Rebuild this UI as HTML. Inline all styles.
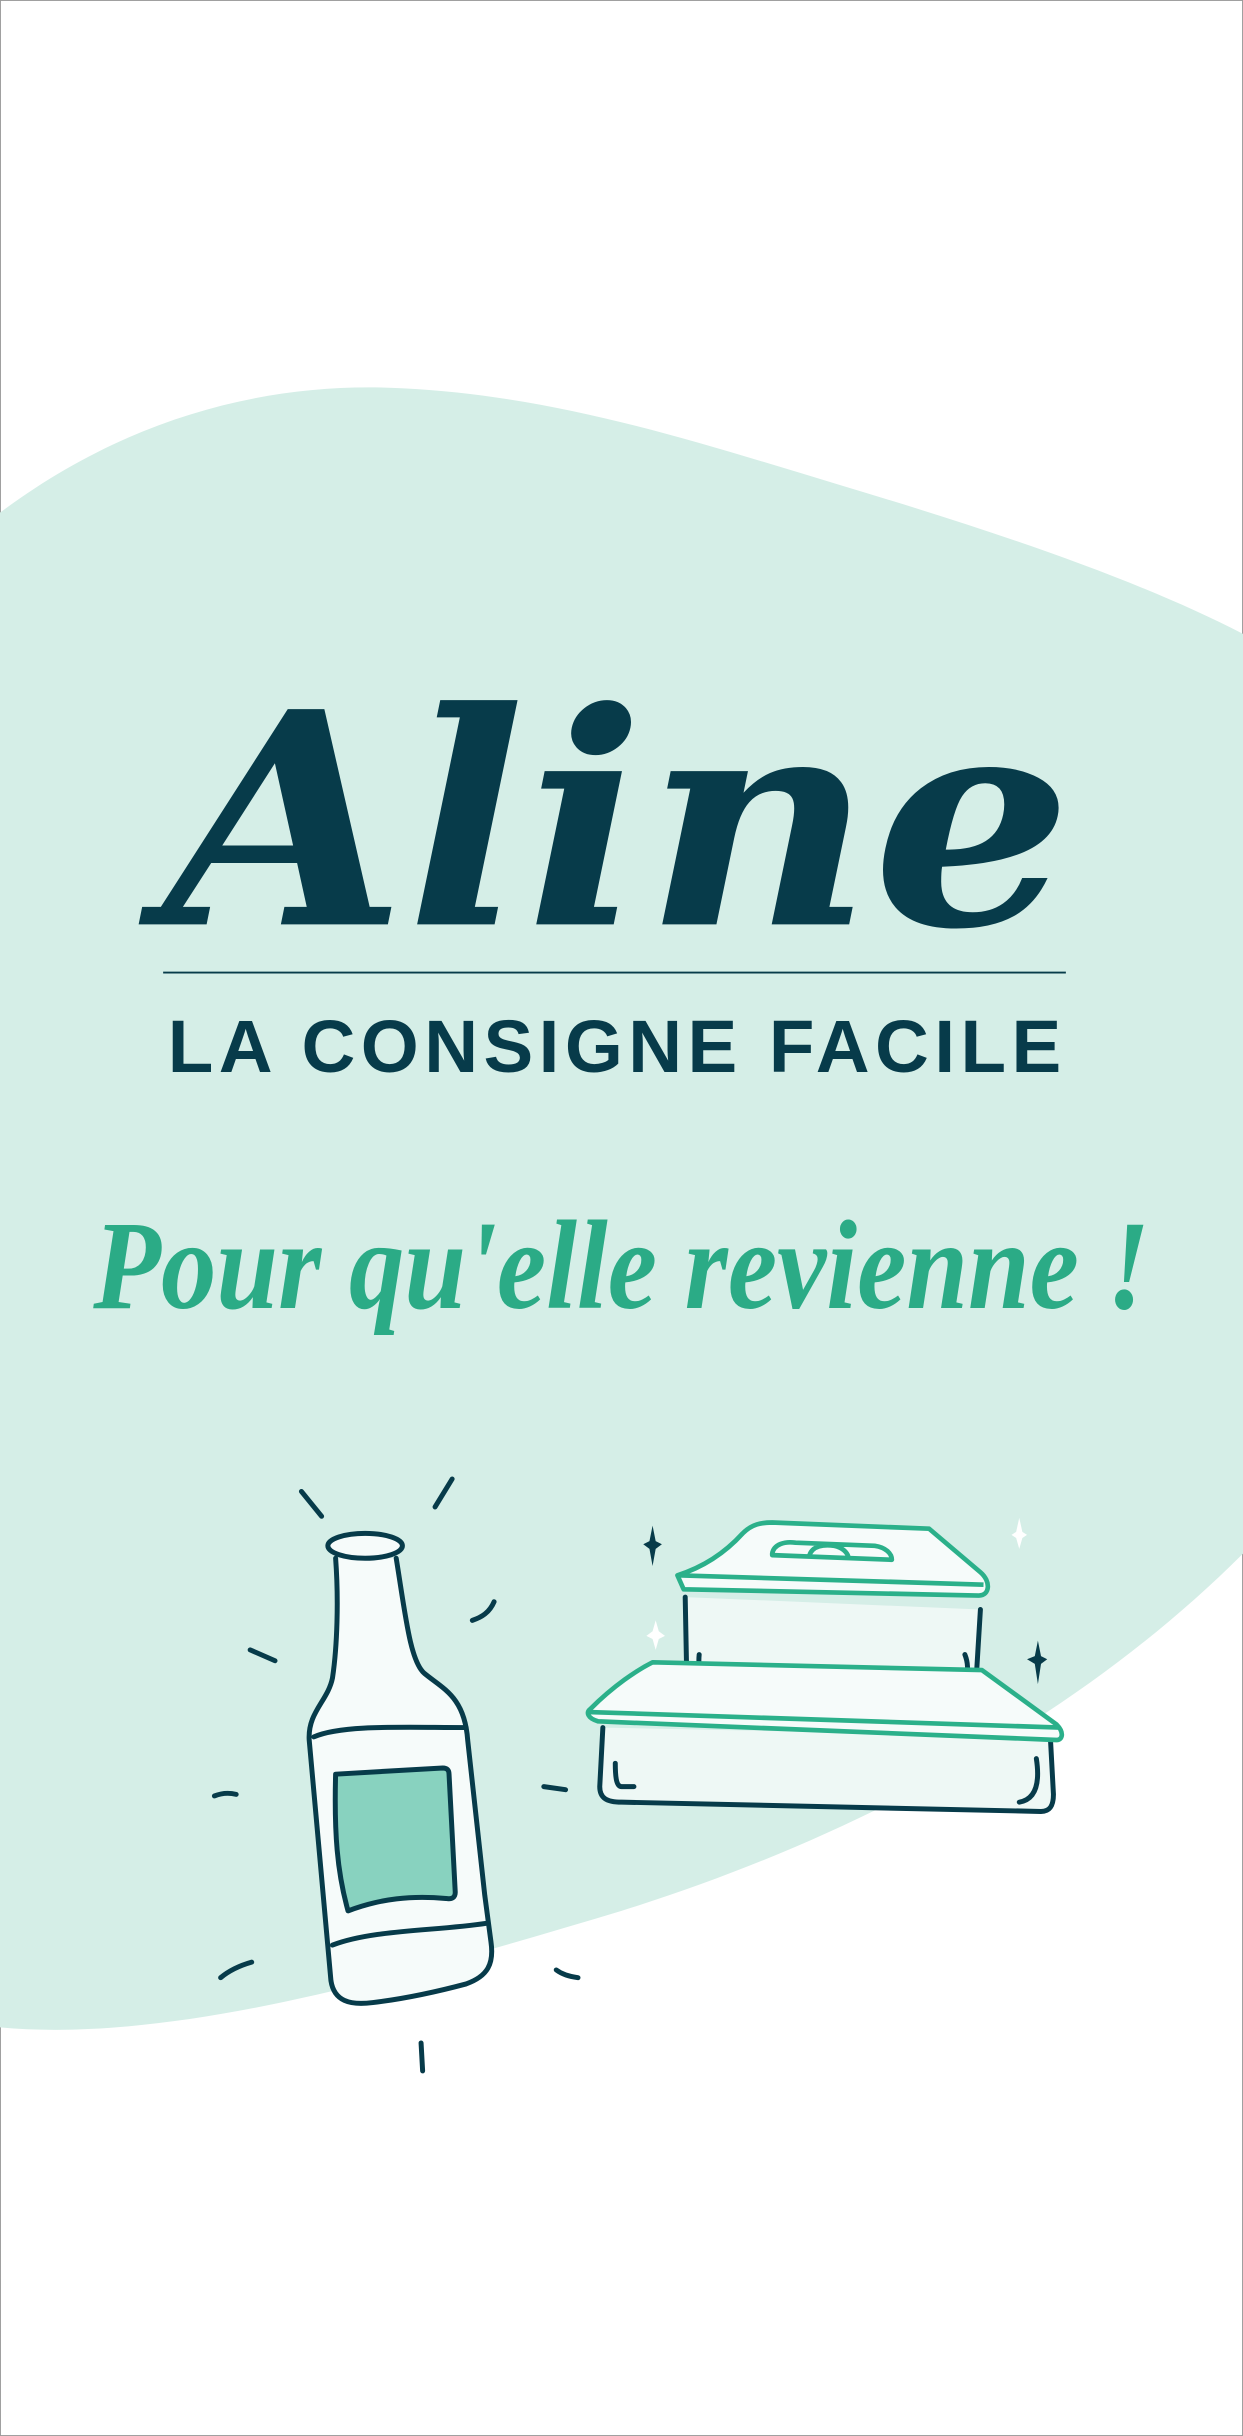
<!DOCTYPE html>
<html><head><meta charset="utf-8"><style>
html,body{margin:0;padding:0;background:#fff}
svg{display:block}
</style></head><body>
<svg width="1243" height="2436" viewBox="0 0 800 1568" preserveAspectRatio="none" xmlns="http://www.w3.org/2000/svg">
<rect x="0.3" y="0.3" width="799.4" height="1567.4" fill="#fff" stroke="#999" stroke-width="0.6"/>
<path d="M0,330 C80,270 170,245 260,250 C360,255 450,285 540,312 C640,342 730,372 800,408 L800,1000 C700,1100 560,1180 400,1230 C250,1275 110,1315 0,1305 Z" fill="#d5eee7"/>
<text x="105" y="595" font-family="DejaVu Serif" font-style="italic" font-weight="bold" font-size="190" fill="#073b4a" textLength="585" lengthAdjust="spacingAndGlyphs">Aline</text>
<line x1="105" y1="626" x2="686" y2="626" stroke="#073b4a" stroke-width="1.2"/>
<text x="108" y="690" font-family="Liberation Sans" font-weight="bold" font-size="48" fill="#073b4a" textLength="575" lengthAdjust="spacing">LA CONSIGNE FACILE</text>
<text x="60" y="842" font-family="Liberation Serif" font-style="italic" font-weight="bold" font-size="82" fill="#2bab86" textLength="680" lengthAdjust="spacingAndGlyphs">Pour qu'elle revienne !</text>
<g fill="none" stroke="#073b4a" stroke-width="3.2" stroke-linecap="round" stroke-linejoin="round">
<path d="M194,960 L207,976 M291,952 L280,970 M304,1043 C310,1041 315,1038 318,1031 M161,1062 L177,1069 M138,1156 C143,1154 148,1154 152,1155 M350,1150 L364,1152 M142,1273 C148,1268 155,1265 162,1263 M358,1268 C362,1271 366,1272 372,1273 M271,1315 L272,1333"/>
<path d="M216,1003 C218,1030 217,1060 214,1080 C211,1095 198,1102 199,1120 L213,1275 C215,1288 225,1291 240,1289 C265,1286 285,1281 300,1277 C314,1272 318,1264 316,1250 L312,1220 L301,1120 C299,1092 285,1087 273,1077 C264,1069 261,1040 255,1003" fill="#f6fbfa"/>
<ellipse cx="235" cy="995" rx="24" ry="8" fill="#f6fbfa"/>
<path d="M202,1118 C220,1110 260,1112 300,1112 M214,1252 C240,1242 280,1243 313,1238"/>
<path d="M216,1142 L285,1138 Q289,1138 289,1142 L293,1218 Q293,1223 287,1222 C265,1220 245,1222 224,1230 C217,1205 215,1180 216,1142 Z" fill="#88d2bf"/>
<path d="M388,1112 L386,1150 C386,1157 390,1160 400,1160 L670,1166 C676,1166 678,1162 678,1155 L676,1118" fill="#eef8f5"/>
<path d="M396,1135 C396,1145 397,1150 400,1150 L408,1150 M667,1132 C669,1145 668,1158 656,1160"/>
<path d="M441,1028 L442,1080 C442,1087 446,1090 456,1091 L615,1097 C625,1097 628,1092 628,1085 L631,1036" fill="#eef8f5"/>
<path d="M450,1065 C449,1075 452,1082 459,1081 M621,1065 C625,1075 622,1087 611,1086"/>
</g>
<g fill="#f6fbfa" stroke="#2bb08a" stroke-width="3" stroke-linejoin="round">
<path d="M380,1100 C395,1085 410,1075 420,1070 L632,1075 L680,1110 C685,1115 684,1120 680,1120 L385,1108 C378,1106 377,1102 380,1100 Z"/>
<path d="M379,1102 L682,1112"/>
<path d="M436,1014 C455,1008 468,998 478,987 C484,981 490,980 497,980 L598,984 L631,1012 C638,1018 637,1027 630,1027 L440,1023 Z"/>
<path d="M436,1014 L633,1020"/>
<path d="M497,1000 C498,994 505,992 512,993 L563,995 C570,996 574,1000 574,1004 L497,1001 Z M521,1001 C523,995 530,994 537,995 C542,996 545,999 546,1002"/>
</g>
<g fill="#073b4a">
<path d="M420,982 L422,992 L426,994 L422,997 L420,1008 L418,997 L414,994 L418,992 Z"/>
<path d="M668,1056 L670,1066 L674,1068 L670,1071 L668,1084 L666,1071 L661,1068 L666,1066 Z"/>
</g>
<g fill="#fff">
<path d="M656,977 L658,986 L661,988 L658,990 L656,997 L654,990 L651,988 L654,986 Z"/>
<path d="M422,1043 L424,1050 L428,1053 L424,1055 L422,1062 L420,1055 L416,1053 L420,1050 Z"/>
</g>
</svg>
</body></html>
